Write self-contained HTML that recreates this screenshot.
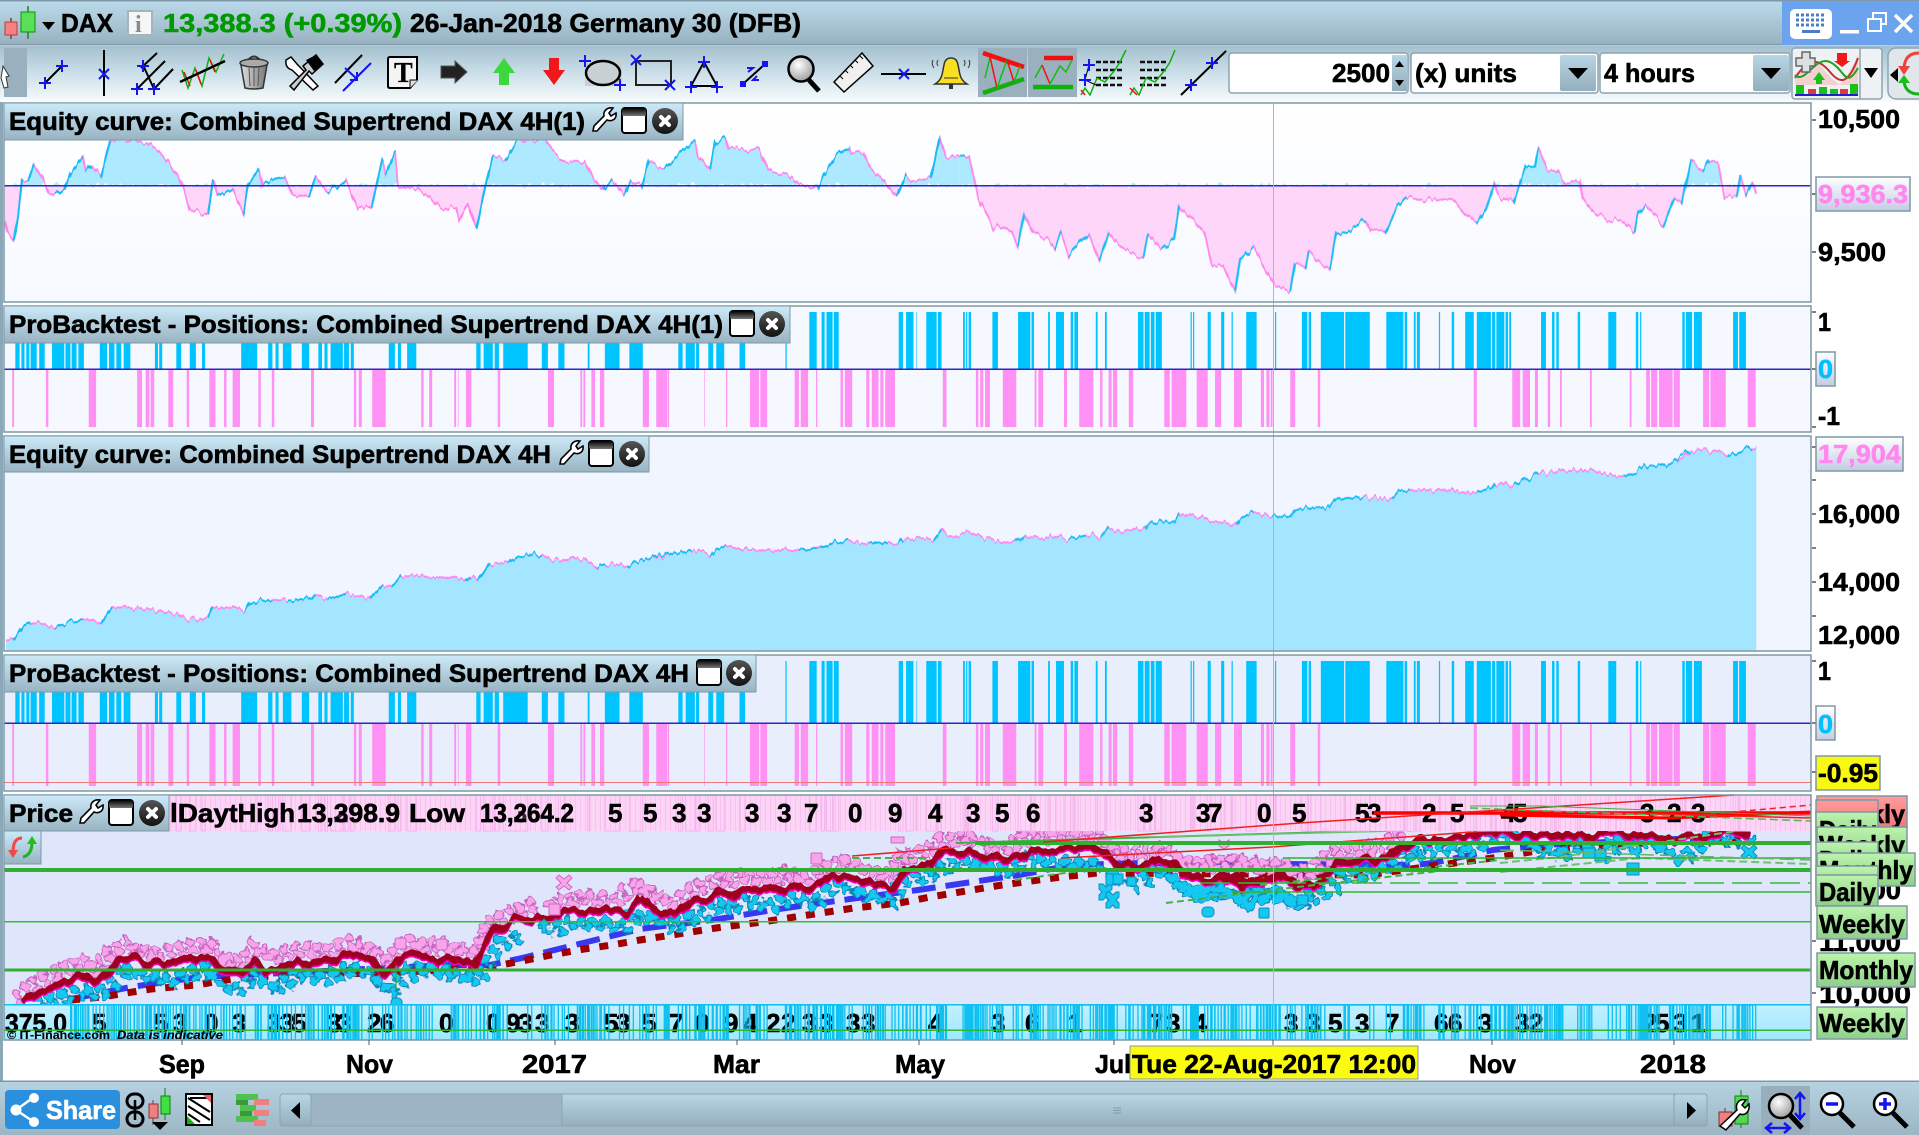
<!DOCTYPE html>
<html><head><meta charset="utf-8"><title>DAX</title>
<style>
html,body{margin:0;padding:0;background:#fff;overflow:hidden}
svg{display:block}
path,polyline,line{vector-effect:non-scaling-stroke}
text{font-family:"Liberation Sans",sans-serif;font-weight:bold;font-size:26px;fill:#000;stroke:#000;stroke-width:.6px;transform:translateY(1px)}
.h{font-size:25px}
.n{fill:none}
</style></head><body>
<svg xmlns="http://www.w3.org/2000/svg" width="1919" height="1135" viewBox="0 0 1919 1135">
<defs>
<linearGradient id="gT" x1="0" y1="0" x2="0" y2="1"><stop offset="0" stop-color="#bcdcec"/><stop offset="1" stop-color="#98b2c0"/></linearGradient>
<linearGradient id="gB" x1="0" y1="0" x2="0" y2="1"><stop offset="0" stop-color="#a4c0ce"/><stop offset=".45" stop-color="#c8dde7"/><stop offset="1" stop-color="#f8fbfc"/></linearGradient>
<linearGradient id="gH" x1="0" y1="0" x2="0" y2="1"><stop offset="0" stop-color="#cdeaf9"/><stop offset="1" stop-color="#98b3c2"/></linearGradient>
<linearGradient id="gBtn" x1="0" y1="0" x2="0" y2="1"><stop offset="0" stop-color="#b8d6e6"/><stop offset="1" stop-color="#94aebc"/></linearGradient>
<linearGradient id="gBot" x1="0" y1="0" x2="0" y2="1"><stop offset="0" stop-color="#b6d2e0"/><stop offset="1" stop-color="#9cb6c4"/></linearGradient>
<linearGradient id="gTag" x1="0" y1="0" x2="0" y2="1"><stop offset="0" stop-color="#fff"/><stop offset="1" stop-color="#c4cce4"/></linearGradient>
<linearGradient id="gGr" x1="0" y1="0" x2="0" y2="1"><stop offset="0" stop-color="#bcf4ac"/><stop offset="1" stop-color="#8ed088"/></linearGradient>
<linearGradient id="gRd" x1="0" y1="0" x2="0" y2="1"><stop offset="0" stop-color="#ff9c9c"/><stop offset="1" stop-color="#f07878"/></linearGradient>
<linearGradient id="gP1" x1="0" y1="0" x2="0" y2="1"><stop offset="0" stop-color="#fff"/><stop offset="1" stop-color="#f6f9ff"/></linearGradient>
<linearGradient id="gBand" x1="0" y1="0" x2="0" y2="1"><stop offset="0" stop-color="#c4f0ff"/><stop offset="1" stop-color="#a0e8ff"/></linearGradient>
<linearGradient id="gWin" x1="0" y1="0" x2="0" y2="1"><stop offset="0" stop-color="#000"/><stop offset="1" stop-color="#777"/></linearGradient>
<linearGradient id="gCl" x1="0" y1="0" x2="0" y2="1"><stop offset="0" stop-color="#555"/><stop offset="1" stop-color="#111"/></linearGradient>
<linearGradient id="gTr" x1="0" y1="0" x2="1" y2="0"><stop offset="0" stop-color="#ddd"/><stop offset=".5" stop-color="#aaa"/><stop offset="1" stop-color="#777"/></linearGradient>
<radialGradient id="gMag" cx=".4" cy=".35" r=".7"><stop offset="0" stop-color="#fff"/><stop offset="1" stop-color="#999"/></radialGradient>
<pattern id="pS" width="5" height="10" patternUnits="userSpaceOnUse"><rect width="5" height="10" fill="#fbd4f6"/><rect width="1" height="10" fill="#f8c2f0"/></pattern>
<filter id="jag" filterUnits="userSpaceOnUse" x="0" y="90" width="1919" height="720" color-interpolation-filters="sRGB"><feTurbulence type="fractalNoise" baseFrequency=".22 .01" numOctaves="2" seed="3" result="n"/><feColorMatrix in="n" type="matrix" values="0 0 0 0 .5 1.6 0 0 0 -.3 0 0 0 0 .5 0 0 0 0 1" result="m"/><feDisplacementMap in="SourceGraphic" in2="m" scale="7" xChannelSelector="R" yChannelSelector="G"/></filter>
<filter id="jag3" filterUnits="userSpaceOnUse" x="0" y="790" width="1919" height="260" color-interpolation-filters="sRGB"><feTurbulence type="fractalNoise" baseFrequency=".09 .01" numOctaves="2" seed="5" result="n"/><feColorMatrix in="n" type="matrix" values="0 0 0 0 .5 1.6 0 0 0 -.3 0 0 0 0 .5 0 0 0 0 1" result="m"/><feDisplacementMap in="SourceGraphic" in2="m" scale="9" xChannelSelector="R" yChannelSelector="G"/></filter>
<filter id="jag2" filterUnits="userSpaceOnUse" x="0" y="790" width="1919" height="260" color-interpolation-filters="sRGB"><feTurbulence type="fractalNoise" baseFrequency=".11 .13" numOctaves="2" seed="8" result="n"/><feColorMatrix in="n" type="matrix" values="1.5 0 0 0 -.25 0 1.5 0 0 -.25 0 0 1 0 0 0 0 0 0 1" result="m"/><feDisplacementMap in="SourceGraphic" in2="m" scale="8" xChannelSelector="R" yChannelSelector="G"/></filter>
<clipPath id="cA"><rect x="0" y="100" width="1919" height="86"/></clipPath>
<clipPath id="cU"><rect x="0" y="186" width="1919" height="116"/></clipPath>
<clipPath id="cP3"><rect x="4" y="436" width="1807" height="215"/></clipPath>
<clipPath id="cP"><rect x="4" y="831" width="1807" height="173"/></clipPath>
<clipPath id="cBd"><rect x="70" y="1004" width="1741" height="36"/></clipPath>
<g id="wr"><path d="M2 24L3 19L13 9C12 4 16 0 22 1L18 6L20 9L25 6C26 12 21 15 16 13L6 24Z" fill="#fff" stroke="#000" stroke-width="1.6"/></g>
<g id="wn"><rect x="1" y="1" width="24" height="25" rx="3" fill="#fff" stroke="#000" stroke-width="2"/><rect x="1" y="1" width="24" height="8" rx="2" fill="url(#gWin)"/></g>
<g id="cl"><circle cx="13" cy="14" r="13" fill="url(#gCl)"/><path d="M9 10L17 18M17 10L9 18" stroke="#fff" stroke-width="4" stroke-linecap="round"/></g>
<g id="pl"><path d="M-6 0H6M0 -6V6" stroke="#1414f0" stroke-width="2" fill="none"/></g>
<g id="xx"><path d="M-5 -5L5 5M5 -5L-5 5" stroke="#1414f0" stroke-width="2" fill="none"/></g>
<path id="bl" d="M25 0h7v1h-7zM35 0h5v1h-5zM43 0h5v1h-5zM50 0h10v1h-10zM64 0h9v1h-9zM85 0h20v1h-20zM107 0h8v1h-8zM117 0h8v1h-8zM128 0h9v1h-9zM163 0h12v1h-12zM178 0h9v1h-9zM190 0h8v1h-8zM202 0h11v1h-11zM253 0h5v1h-5zM260 0h5v1h-5zM288 0h8v1h-8zM310 0h10v1h-10zM330 0h5v1h-5zM394 0h26v1h-26zM438 0h7v1h-7zM450 0h5v1h-5zM462 0h14v1h-14zM493 0h12v1h-12zM520 0h6v1h-6zM530 0h5v1h-5zM540 0h20v1h-20zM562 0h8v1h-8zM573 0h5v1h-5zM635 0h10v1h-10zM650 0h5v1h-5zM665 0h15v1h-15zM778 0h7v1h-7zM790 0h15v1h-15zM808 0h7v1h-7zM822 0h40v1h-40zM885 0h10v1h-10zM912 0h10v1h-10zM960 0h3v1h-3zM988 0h24v1h-24zM1028 0h22v1h-22zM1108 0h7v1h-7zM1120 0h15v1h-15zM1137 0h5v1h-5zM1157 0h8v1h-8zM1170 0h13v1h-13zM1208 0h9v1h-9zM1283 0h2v1h-2zM1322 0h12v1h-12zM1342 0h5v1h-5zM1350 0h10v1h-10zM1362 0h8v1h-8zM1468 0h7v1h-7zM1480 0h12v1h-12zM1497 0h1v1h-1zM1513 0h17v1h-17zM1532 0h6v1h-6z"/>
<path id="pk" d="M20 0h3v1h-3zM75 0h4v1h-4zM145 0h12v1h-12zM224 0h8v1h-8zM238 0h6v1h-6zM246 0h6v1h-6zM275 0h8v1h-8zM305 0h4v1h-4zM342 0h10v1h-10zM366 0h4v1h-4zM380 0h12v1h-12zM422 0h4v1h-4zM444 0h4v1h-4zM508 0h5v1h-5zM578 0h4v1h-4zM586 0h5v1h-5zM608 0h22v1h-22zM688 0h4v1h-4zM701 0h5v1h-5zM742 0h3v1h-3zM748 0h1v1h-1zM761 0h9v1h-9zM813 0h4v1h-4zM895 0h10v1h-10zM948 0h3v1h-3zM953 0h3v1h-3zM966 0h6v1h-6zM980 0h7v1h-7zM1050 0h10v1h-10zM1072 0h18v1h-18zM1091 0h2v1h-2zM1150 0h1v1h-1zM1186 0h2v1h-2zM1225 0h15v1h-15zM1242 0h11v1h-11zM1298 0h7v1h-7zM1308 0h12v1h-12zM1333 0h2v1h-2zM1373 0h4v1h-4zM1380 0h12v1h-12zM1415 0h5v1h-5zM1424 0h11v1h-11zM1438 0h5v1h-5zM1446 0h16v1h-16zM1540 0h6v1h-6z"/>
<path id="br" d="M5 0h3v1h-3zM10 0h2v1h-2zM14 0h4v1h-4zM53 0h9v1h-9zM95 0h20v1h-20zM117 0h4v1h-4zM144 0h3v1h-3zM157 0h13v1h-13zM181 0h4v1h-4zM187 0h6v1h-6zM222 0h3v1h-3zM237 0h3v1h-3zM291 0h9v1h-9zM302 0h8v1h-8zM312 0h6v1h-6zM320 0h10v1h-10zM377 0h2v1h-2zM381 0h2v1h-2zM405 0h5v1h-5zM427 0h5v1h-5zM444 0h2v1h-2zM468 0h17v1h-17zM515 0h2v1h-2zM559 0h9v1h-9zM570 0h4v1h-4zM590 0h38v1h-38zM630 0h40v1h-40zM697 0h28v1h-28zM727 0h4v1h-4zM742 0h3v1h-3zM747 0h5v1h-5zM783 0h2v1h-2zM804 0h4v1h-4zM826 0h14v1h-14zM845 0h23v1h-23zM870 0h5v1h-5zM877 0h13v1h-13zM892 0h4v1h-4zM898 0h3v1h-3zM950 0h8v1h-8zM968 0h4v1h-4zM975 0h4v1h-4zM1010 0h4v1h-4zM1060 0h13v1h-13zM1105 0h4v1h-4zM1112 0h2v1h-2zM1181 0h4v1h-4zM1187 0h10v1h-10zM1200 0h13v1h-13zM1264 0h8v1h-8zM1274 0h11v1h-11z"/>
<path id="pr" d="M26 0h4v1h-4zM33 0h5v1h-5zM41 0h8v1h-8zM70 0h22v1h-22zM122 0h3v1h-3zM128 0h8v1h-8zM170 0h5v1h-5zM195 0h23v1h-23zM229 0h4v1h-4zM243 0h5v1h-5zM250 0h7v1h-7zM276 0h7v1h-7zM334 0h9v1h-9zM346 0h24v1h-24zM387 0h18v1h-18zM417 0h10v1h-10zM448 0h13v1h-13zM492 0h5v1h-5zM501 0h5v1h-5zM508 0h3v1h-3zM540 0h8v1h-8zM585 0h4v1h-4zM840 0h5v1h-5zM903 0h13v1h-13zM920 0h12v1h-12zM940 0h5v1h-5zM961 0h4v1h-4zM981 0h3v1h-3zM1030 0h3v1h-3zM1095 0h3v1h-3zM1122 0h6v1h-6zM1130 0h10v1h-10zM1143 0h22v1h-22zM1167 0h10v1h-10zM1215 0h10v1h-10zM1227 0h25v1h-25zM1288 0h13v1h-13z"/>
<g id="pinkP">
<path transform="translate(0,790) scale(.4082,.3333)" d="M40 625L70 590L110 565L170 530L205 515L230 540L270 480L310 465L340 490L390 490L430 478L500 465L520 470L545 515L590 515L620 475L660 500L715 485L750 480L790 490L850 460L880 470L920 490L950 520L970 480L1005 455L1040 470L1080 465L1120 480L1160 495L1190 410L1240 375L1300 350M1345 355L1380 330L1440 325L1500 328L1550 290L1568 295"/>
<path transform="translate(640,790) scale(.4209,.3333)" d="M0 295L40 320L70 340L110 310L130 295L180 265L210 275L240 260L310 265L350 250L390 265L430 240L480 215L530 240L590 260L620 195L650 195L700 165L720 150L770 140L810 165L870 175L920 135L960 140L1040 135L1090 140L1130 190L1190 185L1250 180L1290 220L1360 220L1420 215L1500 230L1560 230"/>
<path d="M1177 863L1207 865L1233 862L1250 867L1277 865L1300 875L1320 862L1337 852L1367 848L1383 845L1397 835L1407 833"/>
</g>
<g id="cyanP">
<path transform="translate(0,790) scale(.4082,.3333)" d="M90 630L150 620L190 600L230 610L270 570L300 530L340 555L410 565L470 545L500 535L530 585L580 590L620 545L650 590L680 590L710 550L760 555L800 565L850 530L890 540L920 575L950 600L975 560L1010 530L1070 540L1120 550L1160 570L1190 510L1220 460L1280 420M1330 415L1360 410L1380 395L1440 395L1520 405L1550 375L1568 365"/>
<path transform="translate(640,790) scale(.4209,.3333)" d="M0 375L30 385L65 410L110 380L150 370L180 335L210 355L240 325L280 340L310 340L350 320L375 320L400 340L440 300L470 280L500 300L540 315L590 325L615 270L640 265L680 250L730 220L780 210L810 230L860 235L920 205L1000 215L1080 220L1110 240L1130 265M1165 280L1195 260L1230 230L1280 290L1330 310L1380 300L1430 335L1470 310L1510 310L1560 340"/>
<path d="M1177 888L1200 893L1220 890L1243 902L1250 892L1273 893L1293 902L1307 898L1320 893L1337 877L1353 873L1368 870L1390 863L1403 852L1415 852L1440 848L1452 848L1467 850L1480 838L1490 835L1513 835L1523 840L1537 850L1550 850L1562 853L1577 838L1590 852L1603 855L1613 838L1630 848L1643 838L1660 847L1673 855L1687 852L1700 838L1727 838L1753 833"/>
</g>
<g id="maP">
<path transform="translate(0,790) scale(.4082,.3333)" d="M55 635L100 605L160 575L210 555L235 578L265 550L290 500L320 497L350 515L390 520L430 515L500 495L520 495L540 530L585 555L625 515L650 545L700 525L740 520L790 520L860 492L910 505L940 555L975 515L990 497L1060 500L1110 515L1160 525L1205 430L1260 390L1350 385L1380 365L1450 362L1540 362L1568 325"/>
<path transform="translate(640,790) scale(.4209,.3333)" d="M0 325L40 360L80 370L130 330L170 325L190 300L220 320L240 295L330 300L370 285L400 300L460 255L510 265L600 295L630 230L690 228L720 185L770 178L810 195L900 200L930 175L960 185L1000 178L1060 175L1100 190L1130 225L1190 230L1230 205L1270 225L1300 260L1350 270L1420 260L1440 290L1480 265L1560 270"/>
<path d="M1180 873L1200 880L1233 880L1243 888L1267 878L1283 877L1302 888L1320 882L1337 863L1367 860L1387 857L1400 845L1423 838L1473 837L1483 832L1530 833L1543 837L1567 835L1593 835L1610 832L1633 835L1647 838L1700 838L1730 832L1750 838"/>
</g>
<path id="eqL" d="M8 257L8 362L12 400L22 425L30 340L36 240L46 240L55 190L68 230L80 280L90 285L105 270L115 220L135 170L140 215L150 195L165 230L180 120L240 125L260 155L275 185L290 225L300 270L310 330L340 345L348 235L355 285L380 270L398 340L405 255L423 205L430 260L445 240L465 225L478 285L505 290L515 230L535 275L565 245L585 325L607 320L625 180L630 220L645 155L650 260L680 265L700 290L720 325L745 325L750 360L765 310L778 390L785 325L795 240L805 170L825 180L845 120L890 120L905 160L925 185L955 185L970 240L985 270L1000 240L1020 285L1030 240L1048 260L1060 180L1085 205L1110 160L1135 120L1140 165L1160 205L1168 130L1185 110L1190 145L1240 150L1255 215L1285 220L1305 255L1335 265L1345 225L1365 170L1387 140L1390 160L1410 160L1420 200L1440 235L1465 290L1480 225L1490 240L1520 235L1535 110L1545 170L1568 172L1568 257Z"/>
<path id="eqR" d="M0 257L0 165L15 175L30 295L45 350L55 390L65 375L85 395L95 440L105 340L120 400L145 420L155 445L165 400L178 465L210 400L228 480L243 400L258 437L280 455L300 470L307 403L330 450L350 420L358 320L380 360L400 400L412 490L430 500L450 575L458 480L480 445L500 510L515 555L540 575L548 490L565 500L570 455L590 490L605 505L615 405L640 390L663 358L672 393L695 393L715 320L730 290L750 300L805 297L825 340L845 370L860 330L873 250L880 290L905 305L925 205L940 200L945 147L960 210L975 210L990 250L1013 240L1018 295L1035 335L1060 360L1085 365L1103 395L1108 345L1120 315L1150 375L1168 295L1180 310L1195 180L1215 215L1225 185L1240 195L1250 290L1270 290L1276 228L1285 285L1295 250L1302 282L1302 257Z"/>
</defs>

<rect width="1919" height="1135" fill="#fff"/>
<!-- title bar -->
<rect x="0" y="0" width="1919" height="44" fill="url(#gT)"/>
<rect x="0" y="0" width="1919" height="1.5" fill="#7f98a8"/>
<rect x="0" y="44" width="1919" height="1.5" fill="#7f98a8"/>
<path d="M11 18V39" stroke="#a03030" stroke-width="1.5"/><rect x="5" y="22" width="12" height="13" fill="#f88080" stroke="#b04040"/>
<path d="M28 6V39" stroke="#109010" stroke-width="1.5"/><rect x="21" y="12" width="14" height="20" fill="#58e058" stroke="#109010"/>
<path d="M42 22H55L48.500 30Z" fill="#000"/>
<text x="61" y="31" textLength="52" lengthAdjust="spacingAndGlyphs">DAX</text>
<rect x="128" y="11" width="24" height="24" fill="#f4f6f8" stroke="#a8b4bc" stroke-width="2"/>
<text x="135" y="31" style="font-family:'Liberation Serif',serif;fill:#8a8a8a;stroke:none;font-size:24px">i</text>
<text x="163" y="31" textLength="239" lengthAdjust="spacingAndGlyphs" style="fill:#009a00;stroke:#009a00">13,388.3 (+0.39%)</text>
<text x="410" y="31" textLength="391" lengthAdjust="spacingAndGlyphs">26-Jan-2018 Germany 30 (DFB)</text>
<rect x="1782" y="1" width="137" height="44" fill="#6ba3ee"/>
<rect x="1790" y="9" width="42" height="30" rx="5" fill="#fff"/>
<path d="M1796 15h30M1796 20h30M1796 25h30" stroke="#4a7cc8" stroke-width="3" stroke-dasharray="3 2" fill="none"/><rect x="1802" y="30" width="18" height="3" fill="#4a7cc8"/>
<rect x="1840" y="30" width="19" height="3.500" fill="#fff"/>
<rect x="1873" y="13" width="13" height="11" fill="none" stroke="#fff" stroke-width="2"/><rect x="1868" y="19" width="13" height="12" fill="#6ba3ee" stroke="#fff" stroke-width="2"/>
<path d="M1895 15L1912 32M1912 15L1895 32" stroke="#fff" stroke-width="3.500"/>

<!-- toolbar -->
<rect x="0" y="46" width="1919" height="56" fill="url(#gB)"/>
<rect x="4" y="48" width="23" height="49" fill="#9ab0be"/>
<path d="M3 66L9 76L6 77L8 87L4 88L1 78Z" fill="#fff" stroke="#333"/>
<path d="M45 83L62 66" stroke="#000" stroke-width="2"/><use href="#pl" x="45" y="83"/><use href="#pl" x="62" y="66"/>
<path d="M104 50V96" stroke="#000" stroke-width="2"/><use href="#xx" x="104" y="74"/>
<path d="M141 68L157 53M137 89L165 61M154 89L173 69M143 65L154 89" stroke="#000" stroke-width="2" fill="none"/><use href="#pl" x="143" y="66"/><use href="#pl" x="137" y="89"/><use href="#pl" x="154" y="89"/>
<path d="M182 70L188 88L195 68L202 86L209 58L216 72L224 54" fill="none" stroke="#10b010" stroke-width="1.500"/><path d="M184 72L190 86M196 70L201 84M210 60L215 72" fill="none" stroke="#e01010" stroke-width="1.500"/>
<path d="M180 82L225 61" stroke="#000" stroke-width="2.500"/>
<path d="M241 65H267L263 88Q254 90 245 88Z" fill="url(#gTr)" stroke="#333" stroke-width="1.500"/><ellipse cx="254" cy="63" rx="14" ry="4" fill="#aaa" stroke="#333" stroke-width="1.500"/><path d="M249 59Q254 54 259 59" fill="none" stroke="#333" stroke-width="2"/><path d="M249 68L250 86M254 68V86M259 68L258 86" stroke="#555"/>
<path d="M286 60L291 57L297 64L318 86L313 90L292 70Q285 68 286 60Z" fill="#fff" stroke="#000" stroke-width="1.500"/><path d="M290 86L306 70L303 66L316 55L323 64L312 74L309 71L294 90Z" fill="#ccc" stroke="#000" stroke-width="1.500"/><path d="M306 60L316 55L323 64L314 71Z" fill="#000"/>
<path d="M335 83L362 55" stroke="#000" stroke-width="2"/><path d="M343 91L371 63" stroke="#1414f0" stroke-width="2"/><path d="M345 68L357 79M357 72V80H350" stroke="#1414f0" stroke-width="2" fill="none"/>
<path d="M390 57H417V80L410 88H390Q388 88 388 86V59Q388 57 390 57Z" fill="#f4f4f4" stroke="#000" stroke-width="2"/><path d="M418 80H410V88" fill="#ddd" stroke="#000"/>
<text x="394" y="81" style="font-family:'Liberation Serif',serif;font-size:28px;stroke-width:.2px">T</text>
<path d="M441 66H455V61L467 72L455 83V78H441Z" fill="#222" stroke="#555"/>
<path d="M504 58L515 73H509V85H499V73H493Z" fill="#3ed83e"/>
<path d="M554 85L565 70H559V58H549V70H543Z" fill="#f01818"/>
<rect x="585" y="60" width="37" height="26" fill="#c8d0d4"/><ellipse cx="603" cy="73" rx="17" ry="12" fill="none" stroke="#000" stroke-width="2.500"/><use href="#pl" x="585" y="61"/><use href="#pl" x="620" y="85"/>
<rect x="636" y="61" width="35" height="24" fill="none" stroke="#222" stroke-width="2"/><use href="#xx" x="636" y="60"/><use href="#xx" x="670" y="85"/>
<path d="M704 62L691 86H717Z" fill="none" stroke="#000" stroke-width="2"/><use href="#pl" x="704" y="62"/><use href="#pl" x="691" y="87"/><use href="#pl" x="717" y="87"/>
<path d="M744 83L764 65" stroke="#000" stroke-width="2"/><rect x="740" y="81" width="6" height="6" fill="#1414f0"/><rect x="762" y="61" width="6" height="6" fill="#1414f0"/><path d="M747 68H753L748 72M759 80H753L757 76" stroke="#1414f0" stroke-width="2" fill="none"/>
<path d="M809 80L819 91" stroke="#000" stroke-width="5"/><circle cx="801" cy="69" r="12.500" fill="url(#gMag)" stroke="#000" stroke-width="2.500"/>
<path d="M834 82L862 53L873 66L844 92Z" fill="#f0f0f0" stroke="#000" stroke-width="1.500"/><path d="M840 76l3 3M845 70l3 3M850 65l3 3M855 60l3 3M860 56l3 3" stroke="#000"/>
<path d="M881 74H926" stroke="#000" stroke-width="2"/><use href="#xx" x="904" y="74"/>
<path d="M951 58Q945 58 944 65C942 73 943 79 935 84H967C959 79 960 73 958 65Q957 58 951 58Z" fill="#f8e020" stroke="#333" stroke-width="1.500"/><rect x="949" y="84" width="4" height="5" fill="#333"/><path d="M944 78H958" stroke="#333"/><path d="M933 60Q931 64 934 68M938 60Q936 63 938 66M969 60Q971 64 968 68M964 60Q966 63 964 66" stroke="#333" fill="none"/>
<rect x="978" y="48" width="49" height="49" fill="#9ab0be"/>
<path d="M983 53L1024 67" stroke="#f01010" stroke-width="4.500"/><path d="M983 93L1024 79" stroke="#10b010" stroke-width="4.500"/>
<path d="M985 78L990 57" stroke="#10c010" stroke-width="1.500"/><path d="M990 57L997 88" stroke="#f01010" stroke-width="1.500"/><path d="M997 88L1007 60" stroke="#10c010" stroke-width="1.500"/><path d="M1007 60L1014 82" stroke="#f01010" stroke-width="1.500"/><path d="M1014 82L1020 66" stroke="#10c010" stroke-width="1.500"/>
<rect x="1028" y="48" width="49" height="49" fill="#9ab0be"/>
<path d="M1044 58H1073" stroke="#f01010" stroke-width="4.500"/><path d="M1033 87H1073" stroke="#10b010" stroke-width="4.500"/>
<path d="M1035 78L1042 65" stroke="#10c010" stroke-width="1.500" fill="none"/><path d="M1042 65L1050 84" stroke="#f01010" stroke-width="1.500"/><path d="M1050 84L1060 66L1066 72L1072 60" stroke="#10c010" stroke-width="1.500" fill="none"/>
<path d="M1096 62h28M1096 70h28M1096 78h28M1096 85h28" stroke="#111" stroke-width="2.500" stroke-dasharray="5 2" fill="none"/><path d="M1081 95L1085 88L1090 95L1097 78L1105 82L1115 70L1120 62L1126 50" stroke="#10b010" stroke-width="1.500" fill="none"/><path d="M1081 90L1085 95" stroke="#f01010" stroke-width="1.500"/><path d="M1089 65L1085 80L1096 85" stroke="#000" fill="none"/><use href="#pl" x="1089" y="65"/><use href="#pl" x="1085" y="80"/>
<path d="M1140 62h28M1140 70h28M1140 78h28M1140 85h28" stroke="#111" stroke-width="2.500" stroke-dasharray="5 2" fill="none"/><path d="M1130 95L1134 88L1139 95L1146 78L1155 82L1165 70L1170 62L1175 50" stroke="#10b010" stroke-width="1.500" fill="none"/><path d="M1130 88L1137 95" stroke="#f01010" stroke-width="1.500"/>
<path d="M1181 95L1226 51" stroke="#000" stroke-width="2"/><use href="#pl" x="1212" y="63"/><use href="#pl" x="1191" y="85"/>

<rect x="1229" y="53" width="179" height="40" rx="3" fill="#fff" stroke="#8ea4b0" stroke-width="1.500"/>
<rect x="1392" y="55" width="15" height="36" fill="url(#gBtn)"/><path d="M1395 67H1404L1399.500 61ZM1395 80H1404L1399.500 86Z" fill="#000"/>
<text x="1332" y="81" textLength="58" lengthAdjust="spacingAndGlyphs">2500</text>
<rect x="1411" y="53" width="187" height="40" rx="3" fill="#fff" stroke="#8ea4b0" stroke-width="1.500"/>
<text x="1415" y="81" textLength="102" lengthAdjust="spacingAndGlyphs">(x) units</text>
<rect x="1560" y="55" width="36" height="36" rx="2" fill="url(#gBtn)"/><path d="M1568 68H1588L1578 79Z" fill="#000"/>
<rect x="1600" y="53" width="190" height="40" rx="3" fill="#fff" stroke="#8ea4b0" stroke-width="1.500"/>
<text x="1604" y="81" textLength="91" lengthAdjust="spacingAndGlyphs">4 hours</text>
<rect x="1753" y="55" width="36" height="36" rx="2" fill="url(#gBtn)"/><path d="M1761 68H1781L1771 79Z" fill="#000"/>

<rect x="1792" y="48" width="90" height="51" rx="3" fill="#eef2f4" stroke="#8ea4b0" stroke-width="1.500"/>
<path d="M1860 48V99" stroke="#8ea4b0" stroke-width="1.500"/>
<path d="M1864 68H1878L1871 78Z" fill="#000"/>
<path d="M1795 80Q1808 55 1820 65Q1832 80 1840 85Q1852 70 1858 54L1858 85L1795 85Z" fill="#f4c8c8" opacity=".8"/>
<path d="M1795 78C1810 55 1820 60 1830 72S1848 85 1858 58" fill="none" stroke="#c83030" stroke-width="2"/>
<path d="M1795 75C1805 85 1815 55 1830 62S1845 90 1858 68" fill="none" stroke="#20a020" stroke-width="2"/>
<path d="M1802 52H1810V58H1815V66H1810V72H1802V66H1796V58H1802Z" fill="#dde0e2" stroke="#666" stroke-width="1.500"/>
<path d="M1837 53H1847V61H1850L1842 67L1834 61H1837Z" fill="#f01818"/>
<path d="M1819 72L1825 80H1822V84H1816V80H1813Z" fill="#18c018"/>
<path d="M1796 85h8v10h-8zM1819 87h8v8h-8zM1830 89h8v6h-8zM1850 84h8v11h-8z" fill="#18c018"/><path d="M1808 89h8v6h-8zM1840 89h8v6h-8z" fill="#e03838"/>
<rect x="1795" y="94" width="63" height="2" fill="#2020d0"/>
<rect x="1888" y="48" width="40" height="51" rx="8" fill="#dfe7eb" stroke="#8ea4b0" stroke-width="1.500"/>
<path d="M1919 53Q1905 53 1904 68" fill="none" stroke="#f04040" stroke-width="3"/><path d="M1898 66H1910L1904 75Z" fill="#f04040"/>
<path d="M1919 94Q1906 94 1904 82" fill="none" stroke="#18b018" stroke-width="3"/><path d="M1898 83H1910L1904 75Z" fill="#18c018"/>
<path d="M1890 75L1898 68V82Z" fill="#000"/>

<!-- left margin -->
<rect x="0" y="102" width="3" height="980" fill="#8aa8b8"/>

<!-- Panel 1 -->
<rect x="4" y="103" width="1807" height="199" fill="url(#gP1)"/>
<g clip-path="url(#cA)"><g filter="url(#jag)">
<use href="#eqL" transform="translate(0,100) scale(.6122,.3333)" fill="#aeeaff"/>
<use href="#eqR" transform="translate(960,100) scale(.6116,.3333)" fill="#aeeaff"/>
</g></g>
<g clip-path="url(#cU)"><g filter="url(#jag)">
<use href="#eqL" transform="translate(0,100) scale(.6122,.3333)" fill="#fdd6fa"/>
<use href="#eqR" transform="translate(960,100) scale(.6116,.3333)" fill="#fdd6fa"/>
</g></g>
<g filter="url(#jag)">
<g transform="translate(0,100) scale(.6122,.3333)">
<path class="n" stroke="#ff88ee" stroke-width="2" d="M8 362L12 400L22 425L30 340L36 240L46 240L55 190L68 230L80 280L90 285L105 270L115 220L135 170L140 215L150 195L165 230L180 120L240 125L260 155L275 185L290 225L300 270L310 330L340 345L348 235L355 285L380 270L398 340L405 255L423 205L430 260L445 240L465 225L478 285L505 290L515 230L535 275L565 245L585 325L607 320L625 180L630 220L645 155L650 260L680 265L700 290L720 325L745 325L750 360L765 310L778 390L785 325L795 240L805 170L825 180L845 120L890 120L905 160L925 185L955 185L970 240L985 270L1000 240L1020 285L1030 240L1048 260L1060 180L1085 205L1110 160L1135 120L1140 165L1160 205L1168 130L1185 110L1190 145L1240 150L1255 215L1285 220L1305 255L1335 265L1345 225L1365 170L1387 140L1390 160L1410 160L1420 200L1440 235L1465 290L1480 225L1490 240L1520 235L1535 110L1545 170L1568 172"/>
<path class="n" stroke="#10c0f8" stroke-width="2" d="M22 425L30 340L36 240M46 240L55 190M90 285L105 270L115 220L135 170M140 215L150 195M165 230L180 120M340 345L348 235M355 285L380 270M398 340L405 255L423 205M430 260L445 240L465 225M505 290L515 230M535 275L565 245M607 320L625 180M630 220L645 155M778 390L785 325L795 240L805 170M825 180L845 120M985 270L1000 240M1020 285L1030 240M1048 260L1060 180M1085 205L1110 160L1135 120M1160 205L1168 130L1185 110M1335 265L1345 225L1365 170L1387 140M1465 290L1480 225M1520 235L1535 110"/>
</g>
<g transform="translate(960,100) scale(.6116,.3333)">
<path class="n" stroke="#ff88ee" stroke-width="2" d="M0 165L15 175L30 295L45 350L55 390L65 375L85 395L95 440L105 340L120 400L145 420L155 445L165 400L178 465L210 400L228 480L243 400L258 437L280 455L300 470L307 403L330 450L350 420L358 320L380 360L400 400L412 490L430 500L450 575L458 480L480 445L500 510L515 555L540 575L548 490L565 500L570 455L590 490L605 505L615 405L640 390L663 358L672 393L695 393L715 320L730 290L750 300L805 297L825 340L845 370L860 330L873 250L880 290L905 305L925 205L940 200L945 147L960 210L975 210L990 250L1013 240L1018 295L1035 335L1060 360L1085 365L1103 395L1108 345L1120 315L1150 375L1168 295L1180 310L1195 180L1215 215L1225 185L1240 195L1250 290L1270 290L1276 228L1285 285L1295 250L1302 282"/>
<path class="n" stroke="#10c0f8" stroke-width="2" d="M0 165L8 170M95 440L105 340M155 445L165 400M178 465L210 400M228 480L243 400M300 470L307 403M330 450L350 420L358 320M450 575L458 480L480 445M540 575L548 490M565 500L570 455M605 505L615 405L640 390L663 358M695 393L715 320L730 290M845 370L860 330L873 250M905 305L925 205L940 200L945 147M1103 395L1108 345L1120 315M1150 375L1168 295M1180 310L1195 180M1215 215L1225 185M1270 290L1276 228M1285 285L1295 250"/>
</g>
</g>
<rect x="4" y="185" width="1807" height="1.500" fill="#2828c8"/>

<!-- Panel 2 -->
<rect x="4" y="306" width="1807" height="126" fill="#f5f8ff"/>
<use href="#bl" transform="translate(0,312) scale(.6122,57)" fill="#00c4ff"/>
<use href="#br" transform="translate(960,312) scale(.6116,57)" fill="#00c4ff"/>
<use href="#pk" transform="translate(0,369) scale(.6122,58)" fill="#ff90f4"/>
<use href="#pr" transform="translate(960,369) scale(.6116,58)" fill="#ff90f4"/>
<rect x="4" y="368.500" width="1807" height="1.500" fill="#2828c8"/>

<!-- Panel 3 -->
<rect x="4" y="436" width="1807" height="215" fill="#f1f5ff"/>
<g clip-path="url(#cP3)"><g filter="url(#jag)">
<g transform="translate(0,430) scale(.6122,.3333)"><path fill="#a4e5ff" d="M10 690L10 628L22 632L38 590L50 577L70 583L90 593L110 580L135 568L165 578L183 533L210 533L250 540L290 553L300 567L340 563L347 533L385 533L400 543L408 520L425 512L445 510L470 512L510 505L515 493L535 507L565 493L605 503L625 468L640 470L655 438L690 438L705 442L745 445L760 452L768 438L780 452L800 398L830 398L845 377L885 375L905 390L955 387L975 410L990 402L1025 408L1035 392L1060 385L1085 385L1090 375L1130 360L1160 375L1170 355L1185 353L1210 358L1305 360L1335 352L1340 358L1365 338L1385 330L1420 340L1450 335L1467 343L1475 327L1525 332L1537 300L1545 315L1570 316L1570 690Z"/>
<path class="n" stroke="#ff88ee" stroke-width="2" d="M10 628L22 632L38 590L50 577L70 583L90 593L110 580L135 568L165 578L183 533L210 533L250 540L290 553L300 567L340 563L347 533L385 533L400 543L408 520L425 512L445 510L470 512L510 505L515 493L535 507L565 493L605 503L625 468L640 470L655 438L690 438L705 442L745 445L760 452L768 438L780 452L800 398L830 398L845 377L885 375L905 390L955 387L975 410L990 402L1025 408L1035 392L1060 385L1085 385L1090 375L1130 360L1160 375L1170 355L1185 353L1210 358L1305 360L1335 352L1340 358L1365 338L1385 330L1420 340L1450 335L1467 343L1475 327L1525 332L1537 300L1545 315L1568 316"/>
<path class="n" stroke="#10c0f8" stroke-width="2" d="M22 632L38 590L50 577M90 593L110 580L135 568M165 578L183 533M340 563L347 533M400 543L408 520L425 512L445 510M470 512L510 505L515 493M535 507L565 493M605 503L625 468M640 470L655 438M760 452L768 438M780 452L800 398M830 398L845 377L885 375M975 410L990 402M1025 408L1035 392L1060 385L1090 375L1130 360M1160 375L1170 355L1185 353M1305 360L1335 352M1340 358L1365 338L1385 330M1420 340L1450 335M1467 343L1475 327M1525 332L1537 300"/>
</g>
<g transform="translate(960,430) scale(.6116,.3333)"><path fill="#a4e5ff" d="M0 690L0 313L15 310L50 330L90 340L105 313L125 322L160 320L178 330L205 314L230 322L243 293L258 305L303 298L308 280L350 272L358 250L400 265L410 275L452 285L458 265L480 248L510 258L540 263L548 240L570 235L603 230L615 208L660 200L672 205L707 205L717 183L735 180L805 182L815 187L845 187L870 175L875 160L905 168L930 145L945 130L975 125L1030 122L1040 128L1085 137L1105 125L1120 110L1155 108L1170 90L1180 92L1195 60L1220 62L1255 75L1270 70L1295 50L1302 57L1302 690Z"/>
<path class="n" stroke="#ff88ee" stroke-width="2" d="M0 313L15 310L50 330L90 340L105 313L125 322L160 320L178 330L205 314L230 322L243 293L258 305L303 298L308 280L350 272L358 250L400 265L410 275L452 285L458 265L480 248L510 258L540 263L548 240L570 235L603 230L615 208L660 200L672 205L707 205L717 183L735 180L805 182L815 187L845 187L870 175L875 160L905 168L930 145L945 130L975 125L1030 122L1040 128L1085 137L1105 125L1120 110L1155 108L1170 90L1180 92L1195 60L1220 62L1255 75L1270 70L1295 50L1302 57"/>
<path class="n" stroke="#10c0f8" stroke-width="2" d="M90 340L105 313M178 330L205 314M230 322L243 293M303 298L308 280L350 272L358 250M452 285L458 265L480 248M510 258L540 263L548 240L570 235L603 230L615 208L660 200M707 205L717 183L735 180M845 187L870 175L875 160M905 168L930 145L945 130M1085 137L1105 125L1120 110L1155 108L1170 90L1195 60M1255 75L1270 70L1295 50"/>
</g>
</g></g>

<!-- Panel 4 -->
<rect x="4" y="655" width="1807" height="136" fill="#e8eefc"/>
<use href="#bl" transform="translate(0,661) scale(.6122,62)" fill="#00c4ff"/>
<use href="#br" transform="translate(960,661) scale(.6116,62)" fill="#00c4ff"/>
<use href="#pk" transform="translate(0,723) scale(.6122,63)" fill="#ff90f4"/>
<use href="#pr" transform="translate(960,723) scale(.6116,63)" fill="#ff90f4"/>
<rect x="4" y="722.500" width="1807" height="1.500" fill="#2828c8"/>
<rect x="4" y="782" width="1807" height="1" fill="#f07878"/>

<!-- Price panel -->
<rect x="4" y="795" width="1807" height="245" fill="#dfe6fb"/>
<g clip-path="url(#cP)" fill="none" stroke-linejoin="round">
<!-- blue dashed supertrend -->
<path stroke="#3838f0" stroke-width="6" stroke-dasharray="24 10" d="M71 999L131 987L200 977L449 965L490 965L522 958L640 929L712 920L779 909L850 899L918 890L1019 875L1073 865L1140 863L1413 865L1433 863L1493 850L1540 845L1700 838"/>
<!-- dark red dotted -->
<path stroke="#a00000" stroke-width="7" stroke-dasharray="9 10" d="M71 1000L102 997L151 989L196 985L245 977L408 972L490 967L522 961L551 955L584 949L612 945L640 940L672 935L716 928L762 922L808 915L854 908L900 903L930 897L972 890L1002 885L1061 877L1080 875L1097 873L1367 875L1440 865L1500 857L1530 852L1577 847L1697 840L1747 837"/>

<!-- pink markers -->
<g filter="url(#jag2)" stroke-linecap="round" stroke-dasharray=".1 11">
<use href="#pinkP" y="-4" stroke="#c860c0" stroke-width="10"/>
<use href="#pinkP" x="5" y="4" stroke="#c860c0" stroke-width="10"/>
<use href="#pinkP" y="-4" stroke="#f8a4e8" stroke-width="7.500"/>
<use href="#pinkP" x="5" y="4" stroke="#f8a4e8" stroke-width="7.500"/>
</g>
<!-- cyan markers -->
<g filter="url(#jag2)" stroke-linecap="round" stroke-dasharray=".1 13">
<use href="#cyanP" y="-2" stroke="#0a88b8" stroke-width="10.500"/>
<use href="#cyanP" x="7" y="5" stroke="#0a88b8" stroke-width="9.500"/>
<use href="#cyanP" y="-2" stroke="#14c8f0" stroke-width="8"/>
<use href="#cyanP" x="7" y="5" stroke="#14c8f0" stroke-width="7"/>
</g>

<!-- MA -->
<g filter="url(#jag3)">
<use href="#maP" y="1.500" stroke="#f000c0" stroke-width="7"/>
<use href="#maP" stroke="#a00020" stroke-width="6.500"/>
</g>
</g>

<g clip-path="url(#cP)">
<!-- individual markers -->
<g fill="#f8a4e8" stroke="#d068c8">
<rect x="891" y="837" width="13" height="6"/><rect x="811" y="853" width="11" height="11" rx="1"/><rect x="549" y="904" width="11" height="11"/><rect x="436" y="939" width="11" height="11" rx="2"/><rect x="395" y="938" width="11" height="11" rx="2"/>
<path d="M559 875L564 879L569 875L572 878L567 883L572 887L569 890L564 886L559 890L556 887L561 883L556 878Z"/>
<path d="M1219 840L1224 843L1229 840L1229 846L1224 849L1219 846Z"/>
</g>
<g fill="#14c8f0" stroke="#0a90c0">
<path d="M1099 884h4l3 3l3-3h3v5l-3 3l3 3v5h-4l-2-3l-3 3h-4v-5l3-3l-3-3Z"/><path d="M1106 892h4l3 3l3-3h3v5l-3 3l3 3v5h-4l-2-3l-3 3h-4v-5l3-3l-3-3Z"/>
<rect x="1202" y="907" width="12" height="10" rx="4"/><rect x="1259" y="908" width="10" height="10" rx="1"/><rect x="1106" y="874" width="11" height="11"/><rect x="1113" y="874" width="10" height="10"/><rect x="1127" y="877" width="9" height="9"/>
<rect x="1297" y="895" width="11" height="10"/><rect x="1595" y="850" width="11" height="11"/><rect x="1583" y="848" width="12" height="10"/><rect x="1627" y="863" width="12" height="12"/>
<path d="M1744 845l5 4l5-4l3 3l-4 4l4 4l-3 3l-5-4l-5 4l-3-3l4-4l-4-4Z"/>
<rect x="391" y="998" width="11" height="10" rx="4"/>
<path d="M538 925l6-6l6 6h-4v8h-4v-8Z"/>
</g>
<path d="M396 965V990" stroke="#10c010"/>

<!-- Trend lines -->
<g fill="none">
<path d="M1015 880L1086 870M852 858H930M1166 903L1297 887L1458 869M1260 885L1500 860" stroke="#48b048" stroke-width="2" stroke-dasharray="7 4"/>
<path d="M1500 863L1560 857L1811 820M1500 872L1640 858L1810 864" stroke="#70c070" stroke-width="2" stroke-dasharray="8 4"/>
<path d="M956 843L1297 833L1500 827L1633 822L1811 830" stroke="#40b040" stroke-width="2"/>
<path d="M1150 837L1520 828L1811 823" stroke="#70c070" stroke-width="1.500"/>
<path d="M1283 858H1811" stroke="#30b030" stroke-width="1.500"/>
<path d="M1500 850L1811 860" stroke="#60b860" stroke-width="1.500" stroke-dasharray="14 6"/>
<path d="M852 856L951 848" stroke="#f02020" stroke-width="1.500"/>
<path d="M1061 858L1271 847L1525 828L1700 815" stroke="#f02020" stroke-width="1.500"/>
<path d="M975 843H1811" stroke="#30b030" stroke-width="4"/>
</g>
</g>
<!-- full width horizontals -->
<rect x="4" y="868" width="1807" height="4" fill="#30b030"/>
<rect x="4" y="921" width="1807" height="1.500" fill="#30c030"/>
<rect x="4" y="968.500" width="1807" height="3" fill="#30b030"/>
<path d="M1200 883H1811" stroke="#38b838" stroke-width="1.500" stroke-dasharray="30 8"/>
<path d="M1232 892H1811" stroke="#30b830" stroke-width="1.500"/>

<!-- top band -->
<rect x="169" y="795" width="1642" height="36" fill="url(#pS)"/>
<use href="#bl" transform="translate(0,795) scale(.6122,36)" fill="none" stroke="#f4b4ec" stroke-width="1"/>
<use href="#br" transform="translate(960,795) scale(.6116,36)" fill="none" stroke="#f4b4ec" stroke-width="1"/>
<text x="170" y="821" textLength="59" lengthAdjust="spacingAndGlyphs">lDay</text>
<text x="229" y="821" textLength="66" lengthAdjust="spacingAndGlyphs">tHigh</text>
<text x="297" y="821" textLength="103" lengthAdjust="spacingAndGlyphs">13,398.9</text>
<text x="297" y="821" textLength="103" lengthAdjust="spacingAndGlyphs" opacity=".8">13,298.9</text>
<text x="409" y="821" textLength="56" lengthAdjust="spacingAndGlyphs">Low</text>
<text x="480" y="821" textLength="94" lengthAdjust="spacingAndGlyphs">13,264.2</text>
<text x="480" y="821" textLength="94" lengthAdjust="spacingAndGlyphs" opacity=".8">13,364.2</text>
<text x="608 643 672 697 745 777 804 848 888 928 966 995 1026 1139 1196 1208 1257 1292 1355 1367 1422 1450 1501 1513 1640 1667 1691" y="821">553333709435633705532545323</text>

<!-- bottom band -->
<rect x="4" y="1004" width="1807" height="36" fill="url(#gBand)"/>
<rect x="4" y="1004" width="1807" height="1.500" fill="#10c0f0"/>
<text x="5" y="1031" textLength="62" lengthAdjust="spacingAndGlyphs">375.0</text>
<text x="92 154 173 204 232 267 280 292 327 337 367 380 439 486 506 518 535 565 604 616 642 669 695 724 743 766 781 802 819 846 861 928 991 1025 1068 1149 1166 1193 1284 1306 1328 1355 1385 1434 1448 1478 1515 1529 1643 1655 1673 1691" y="1031">5530333533260093335357094223333436173433537663322531</text>
<g clip-path="url(#cBd)" fill="none" stroke="#10c0f0" stroke-width="1.300">
<use href="#bl" transform="translate(0,1005) scale(.6122,35)"/>
<use href="#pk" transform="translate(0,1005) scale(.6122,35)"/>
<use href="#bl" transform="translate(4,1005) scale(.6122,35)"/>
<use href="#pk" transform="translate(-3,1005) scale(.6122,35)"/>
<use href="#br" transform="translate(960,1005) scale(.6116,35)"/>
<use href="#pr" transform="translate(960,1005) scale(.6116,35)"/>
<use href="#br" transform="translate(964,1005) scale(.6116,35)"/>
<use href="#pr" transform="translate(957,1005) scale(.6116,35)"/>
</g>
<rect x="4" y="1029.500" width="1807" height="1.500" fill="#30b830"/>
<text x="7" y="1038" textLength="103" lengthAdjust="spacingAndGlyphs" style="font-size:12px;stroke-width:.1px">© IT-Finance.com</text>
<text x="117" y="1038" textLength="106" lengthAdjust="spacingAndGlyphs" style="font-size:12px;font-style:italic;stroke-width:.1px">Data is indicative</text>

<!-- thick red / extras over top band -->
<g fill="none">
<path d="M1374 813H1811" stroke="#ff0000" stroke-width="3.500"/>
<path d="M1500 815L1670 818L1811 812" stroke="#ff0000" stroke-width="3"/>
<path d="M1043 842L1300 823L1734 795" stroke="#f02020" stroke-width="1.500"/>
<path d="M1700 815L1811 805" stroke="#f02020" stroke-width="1.500" stroke-dasharray="6 4"/>
<path d="M1500 810L1811 818" stroke="#f02020" stroke-width="1.500"/>
<path d="M1470 808L1811 821" stroke="#50b850" stroke-width="1.500" stroke-dasharray="8 4"/>
<path d="M1470 806H1540L1811 816" stroke="#40b040" stroke-width="1"/>
</g>

<!-- crosshair -->
<rect x="1273" y="103" width="1" height="937" fill="#f89898"/>

<!-- panel borders -->
<g fill="none" stroke="#7f98a4" stroke-width="1.500">
<rect x="4" y="103" width="1807" height="199"/><rect x="4" y="306" width="1807" height="126"/><rect x="4" y="436" width="1807" height="215"/><rect x="4" y="655" width="1807" height="136"/><rect x="4" y="795" width="1807" height="245"/>
</g>

<!-- headers -->
<rect x="4" y="103" width="679" height="37" fill="url(#gH)" stroke="#7f98a4"/>
<text class="h" x="9" y="129" textLength="576" lengthAdjust="spacingAndGlyphs">Equity curve: Combined Supertrend DAX 4H(1)</text>
<use href="#wr" x="591" y="107"/><use href="#wn" x="621" y="107"/><use href="#cl" x="652" y="107"/>
<rect x="4" y="306" width="786" height="37" fill="url(#gH)" stroke="#7f98a4"/>
<text class="h" x="9" y="332" textLength="714" lengthAdjust="spacingAndGlyphs">ProBacktest - Positions: Combined Supertrend DAX 4H(1)</text>
<use href="#wn" x="729" y="310"/><use href="#cl" x="759" y="310"/>
<rect x="4" y="436" width="645" height="36" fill="url(#gH)" stroke="#7f98a4"/>
<text class="h" x="9" y="462" textLength="542" lengthAdjust="spacingAndGlyphs">Equity curve: Combined Supertrend DAX 4H</text>
<use href="#wr" x="558" y="440"/><use href="#wn" x="588" y="440"/><use href="#cl" x="619" y="440"/>
<rect x="4" y="655" width="752" height="37" fill="url(#gH)" stroke="#7f98a4"/>
<text class="h" x="9" y="681" textLength="680" lengthAdjust="spacingAndGlyphs">ProBacktest - Positions: Combined Supertrend DAX 4H</text>
<use href="#wn" x="696" y="659"/><use href="#cl" x="726" y="659"/>
<rect x="4" y="795" width="165" height="36" fill="url(#gH)" stroke="#7f98a4"/>
<text class="h" x="9" y="821" textLength="64" lengthAdjust="spacingAndGlyphs">Price</text>
<use href="#wr" x="78" y="799"/><use href="#wn" x="108" y="799"/><use href="#cl" x="139" y="799"/>
<rect x="4" y="831" width="37" height="33" fill="url(#gH)" stroke="#7f98a4"/>
<path d="M22 838Q13 838 13 852" fill="none" stroke="#f04848" stroke-width="3"/><path d="M8 850H18L13 858Z" fill="#f04848"/>
<path d="M23 857Q32 855 32 842" fill="none" stroke="#20b020" stroke-width="3"/><path d="M27 844H37L32 836Z" fill="#20c020"/>

<!-- right axis -->
<path d="M1812 120h4M1812 194h4M1812 252h4M1812 312h4M1812 369h4M1812 427h4M1812 447h4M1812 480h4M1812 514h4M1812 548h4M1812 582h4M1812 616h4M1812 661h4M1812 723h4M1812 772h4M1812 941h4M1812 993h4" stroke="#556" stroke-width="1.500"/>
<text x="1818" y="127" textLength="82" lengthAdjust="spacingAndGlyphs">10,500</text>
<text x="1818" y="260" textLength="68" lengthAdjust="spacingAndGlyphs">9,500</text>
<rect x="1816" y="177" width="94" height="34" fill="url(#gTag)" stroke="#7f98a4" stroke-width="1.500"/>
<text x="1818" y="202" textLength="90" lengthAdjust="spacingAndGlyphs" style="fill:#ff88ee;stroke:#ff88ee">9,936.3</text>
<text x="1818" y="330" textLength="13" lengthAdjust="spacingAndGlyphs">1</text>
<rect x="1816" y="352" width="19" height="34" fill="url(#gTag)" stroke="#7f98a4" stroke-width="1.500"/>
<text x="1818" y="377" textLength="15" lengthAdjust="spacingAndGlyphs" style="fill:#00c0ff;stroke:#00c0ff">0</text>
<text x="1818" y="424" textLength="22" lengthAdjust="spacingAndGlyphs">-1</text>
<rect x="1816" y="437" width="87" height="34" fill="url(#gTag)" stroke="#7f98a4" stroke-width="1.500"/>
<text x="1818" y="462" textLength="83" lengthAdjust="spacingAndGlyphs" style="fill:#ff88ee;stroke:#ff88ee">17,904</text>
<text x="1818" y="522" textLength="82" lengthAdjust="spacingAndGlyphs">16,000</text>
<text x="1818" y="590" textLength="82" lengthAdjust="spacingAndGlyphs">14,000</text>
<text x="1818" y="643" textLength="82" lengthAdjust="spacingAndGlyphs">12,000</text>
<text x="1818" y="679" textLength="13" lengthAdjust="spacingAndGlyphs">1</text>
<rect x="1816" y="706" width="19" height="34" fill="url(#gTag)" stroke="#7f98a4" stroke-width="1.500"/>
<text x="1818" y="732" textLength="15" lengthAdjust="spacingAndGlyphs" style="fill:#00c0ff;stroke:#00c0ff">0</text>
<rect x="1816" y="756" width="64" height="34" fill="#f8f810" stroke="#7f98a4" stroke-width="1.500"/>
<text x="1818" y="781" textLength="60" lengthAdjust="spacingAndGlyphs">-0.95</text>

<text x="1819" y="898" textLength="82" lengthAdjust="spacingAndGlyphs">11,500</text>
<text x="1819" y="950" textLength="82" lengthAdjust="spacingAndGlyphs">11,000</text>
<text x="1819" y="1002" textLength="92" lengthAdjust="spacingAndGlyphs">10,000</text>
<!-- tags -->
<g stroke="#7f98a4" stroke-width="1.500">
<rect x="1817" y="796" width="90" height="32" fill="url(#gRd)"/>
</g>
<text x="1819" y="822" textLength="86" lengthAdjust="spacingAndGlyphs">Weekly</text>
<rect x="1816" y="800" width="62" height="32" fill="url(#gRd)" stroke="#7f98a4" stroke-width="1.500"/>
<rect x="1816" y="812" width="62" height="32" fill="url(#gGr)" stroke="#7f98a4" stroke-width="1.500"/>
<text x="1819" y="838" textLength="57" lengthAdjust="spacingAndGlyphs">Daily</text>
<rect x="1817" y="827" width="90" height="33" fill="url(#gGr)" stroke="#7f98a4" stroke-width="1.500"/>
<text x="1819" y="853" textLength="86" lengthAdjust="spacingAndGlyphs">Weekly</text>
<rect x="1816" y="842" width="62" height="32" fill="url(#gGr)" stroke="#7f98a4" stroke-width="1.500"/>
<text x="1819" y="868" textLength="57" lengthAdjust="spacingAndGlyphs">Daily</text>
<rect x="1817" y="853" width="98" height="33" fill="url(#gGr)" stroke="#7f98a4" stroke-width="1.500"/>
<text x="1819" y="878" textLength="94" lengthAdjust="spacingAndGlyphs">Monthly</text>
<rect x="1816" y="866" width="62" height="30" fill="url(#gGr)" stroke="#7f98a4" stroke-width="1.500"/>
<rect x="1816" y="875" width="62" height="31" fill="url(#gGr)" stroke="#7f98a4" stroke-width="1.500"/>
<text x="1819" y="900" textLength="57" lengthAdjust="spacingAndGlyphs">Daily</text>
<rect x="1817" y="906" width="90" height="33" fill="url(#gGr)" stroke="#7f98a4" stroke-width="1.500"/>
<text x="1819" y="932" textLength="86" lengthAdjust="spacingAndGlyphs">Weekly</text>
<rect x="1817" y="953" width="98" height="34" fill="url(#gGr)" stroke="#7f98a4" stroke-width="1.500"/>
<text x="1819" y="978" textLength="94" lengthAdjust="spacingAndGlyphs">Monthly</text>
<rect x="1817" y="1007" width="90" height="32" fill="url(#gGr)" stroke="#7f98a4" stroke-width="1.500"/>
<text x="1819" y="1031" textLength="86" lengthAdjust="spacingAndGlyphs">Weekly</text>

<!-- time axis -->
<path d="M182 1040v5M369 1040v5M555 1040v5M737 1040v5M919 1040v5M1114 1040v5M1273 1040v5M1492 1040v5M1674 1040v5" stroke="#556" stroke-width="1"/>
<text x="159" y="1072" textLength="46" lengthAdjust="spacingAndGlyphs">Sep</text>
<text x="346" y="1072" textLength="47" lengthAdjust="spacingAndGlyphs">Nov</text>
<text x="522" y="1072" textLength="65" lengthAdjust="spacingAndGlyphs">2017</text>
<text x="713" y="1072" textLength="47" lengthAdjust="spacingAndGlyphs">Mar</text>
<text x="895" y="1072" textLength="50" lengthAdjust="spacingAndGlyphs">May</text>
<text x="1095" y="1072" textLength="36" lengthAdjust="spacingAndGlyphs">Jul</text>
<rect x="1130" y="1046" width="288" height="33" fill="#fbfb10" stroke="#8a9aa4"/>
<text x="1132" y="1072" textLength="284" lengthAdjust="spacingAndGlyphs">Tue 22-Aug-2017 12:00</text>
<text x="1469" y="1072" textLength="47" lengthAdjust="spacingAndGlyphs">Nov</text>
<text x="1640" y="1072" textLength="66" lengthAdjust="spacingAndGlyphs">2018</text>

<!-- bottom bar -->
<rect x="0" y="1081" width="1919" height="54" fill="url(#gBot)"/>
<rect x="0" y="1080.500" width="1919" height="1.500" fill="#7f98a8"/>
<rect x="5" y="1090" width="115" height="39" rx="4" fill="#2a8fdc"/>
<path d="M34 1097L16 1110L34 1122" fill="none" stroke="#fff" stroke-width="2.500"/><circle cx="34" cy="1098" r="5" fill="#fff"/><circle cx="16" cy="1110" r="5.500" fill="#fff"/><circle cx="34" cy="1122" r="5" fill="#fff"/>
<text x="46" y="1118" textLength="70" lengthAdjust="spacingAndGlyphs" style="fill:#fff;stroke:#fff">Share</text>
<rect x="127" y="1094" width="16" height="14" rx="7" fill="none" stroke="#000" stroke-width="3"/><rect x="127" y="1112" width="16" height="14" rx="7" fill="none" stroke="#000" stroke-width="3"/>
<path d="M135 1100V1120" stroke="#000" stroke-width="2.500"/>
<path d="M153 1100V1125" stroke="#903030"/><rect x="149" y="1104" width="9" height="14" fill="#f08080" stroke="#903030"/>
<path d="M165 1088V1120" stroke="#108010"/><rect x="161" y="1096" width="9" height="18" fill="#40e040" stroke="#108010"/>
<path d="M152 1122H168L160 1130Z" fill="#000"/>
<rect x="186" y="1094" width="26" height="31" fill="#fff" stroke="#000" stroke-width="2"/>
<path d="M188 1098L210 1112M188 1106L210 1120M188 1114L200 1122M190 1098H208" stroke="#000" stroke-width="2"/><path d="M203 1095H211V1103Z" fill="#f06060"/><path d="M187 1124V1116L195 1124Z" fill="#18b018"/>
<g fill="#50c050"><rect x="236" y="1094" width="22" height="6"/><rect x="240" y="1105" width="16" height="6"/><rect x="236" y="1116" width="22" height="6"/></g>
<g fill="#f08080"><rect x="254" y="1099" width="15" height="6"/><rect x="254" y="1110" width="15" height="6"/><rect x="254" y="1120" width="12" height="6"/></g>
<rect x="236" y="1100" width="12" height="5" fill="#3a9a3a"/><rect x="240" y="1111" width="12" height="5" fill="#3a9a3a"/>

<rect x="280" y="1094" width="1427" height="32" rx="3" fill="#9cb4c4" stroke="#8ea4b0"/>
<rect x="280" y="1094" width="31" height="32" rx="3" fill="url(#gBtn)" stroke="#8ea4b0"/>
<path d="M300 1102V1119L291 1110.500Z" fill="#000"/>
<rect x="562" y="1094" width="1112" height="32" fill="url(#gBtn)" stroke="#8ea4b0"/>
<path d="M1113 1108h8M1113 1110.500h8M1113 1113h8" stroke="#8a9aa6"/>
<rect x="1674" y="1094" width="33" height="32" rx="3" fill="url(#gBtn)" stroke="#8ea4b0"/>
<path d="M1687 1102V1119L1696 1110.500Z" fill="#000"/>

<path d="M1725 1108V1130" stroke="#803030"/><rect x="1719" y="1112" width="13" height="14" fill="#f08080" stroke="#803030"/>
<path d="M1741 1090V1128" stroke="#108010"/><rect x="1735" y="1096" width="13" height="28" fill="#50d850" stroke="#108010"/>
<path d="M1720 1126L1737 1110C1735 1104 1739 1098 1746 1100L1742 1105L1745 1108L1749 1104C1750 1112 1745 1116 1740 1114L1726 1130Z" fill="#fff" stroke="#000" stroke-width="1.500"/>

<rect x="1761" y="1086" width="49" height="49" fill="#98aebc"/>
<circle cx="1781" cy="1106" r="12" fill="url(#gMag)" stroke="#000" stroke-width="2.500"/><path d="M1790 1115L1802 1128" stroke="#000" stroke-width="5"/>
<path d="M1800 1094V1118M1795 1099L1800 1093L1805 1099M1795 1113L1800 1119L1805 1113" stroke="#1414f0" stroke-width="2.500" fill="none"/>
<path d="M1767 1128H1789M1772 1123L1766 1128L1772 1133M1784 1123L1790 1128L1784 1133" stroke="#1414f0" stroke-width="2.500" fill="none"/>
<circle cx="1832" cy="1104" r="11" fill="#fff" stroke="#000" stroke-width="2.500"/><path d="M1840 1113L1854 1127" stroke="#000" stroke-width="5"/><path d="M1826 1104H1838" stroke="#1414f0" stroke-width="3.500"/>
<circle cx="1885" cy="1104" r="11" fill="#fff" stroke="#000" stroke-width="2.500"/><path d="M1893 1113L1907 1127" stroke="#000" stroke-width="5"/><path d="M1879 1104H1891M1885 1098V1110" stroke="#1414f0" stroke-width="3.500"/>
</svg>
</body></html>
